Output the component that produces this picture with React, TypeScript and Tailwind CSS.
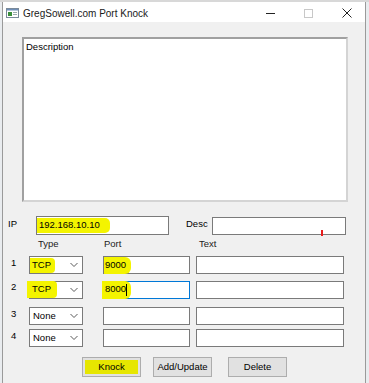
import React from "react";

const font = { fontFamily: '"Liberation Sans", Arial, sans-serif' };

const Chevron = () => (
  <svg width="8" height="5" viewBox="0 0 8 5" className="absolute right-[4px] top-1/2 -translate-y-1/2">
    <polyline points="0.5,0.5 4,4 7.5,0.5" fill="none" stroke="#5a5a5a" strokeWidth="1" />
  </svg>
);

const Select: React.FC<{ value: string; hi?: boolean; hiClass?: string }> = ({ value, hi, hiClass }) => (
  <div className="relative w-[54px] h-[18px] bg-white border border-[#7a7a7a] flex items-center">
    {hi ? (
      <span className={`bg-[#f4f400] h-[15px] flex items-center pl-[2px] pr-[4px] rounded-r-[4px] ${hiClass ?? ""}`}>{value}</span>
    ) : (
      <span className="pl-[3px]">{value}</span>
    )}
    <Chevron />
  </div>
);

const Input: React.FC<{ w: string; children?: React.ReactNode; focus?: boolean }> = ({ w, children, focus }) => (
  <div
    className={`${w} h-[18px] bg-white border ${focus ? "border-[#0078d7]" : "border-[#7a7a7a]"} flex items-center relative`}
  >
    {children}
  </div>
);

const Button: React.FC<{ label: string; hi?: boolean }> = ({ label, hi }) => (
  <div className="w-[59px] h-[20px] border border-[#adadad] bg-[#e1e1e1] flex items-center justify-center p-[2px]">
    <div className={`w-full h-full flex items-center justify-center ${hi ? "bg-[#e6e600]" : ""}`}>{label}</div>
  </div>
);

export default function App() {
  return (
    <div className="w-[369px] h-[383px] bg-[#e9ecef] overflow-hidden text-[9.5px] text-black" style={font}>
      <div className="h-[2px] bg-[#d8d8d8]" />
      <div className="ml-[2px] w-[364px] h-[381px] border-l border-r border-[#9a9a9a] bg-[#f0f0f0] flex flex-col">
        {/* title bar */}
        <div className="h-[20px] bg-white flex items-center relative">
          <svg width="13" height="10" viewBox="0 0 13 10" className="ml-[3px] mt-[2px]">
            <rect x="0.5" y="0.5" width="12" height="9" fill="#fff" stroke="#7a8a9a" />
            <rect x="1" y="1" width="11" height="1.5" fill="#6f8fb8" />
            <rect x="2" y="4" width="4" height="4" fill="#3a8f3a" />
            <rect x="7" y="4" width="4" height="1" fill="#9aa" />
            <rect x="7" y="6" width="4" height="1" fill="#9aa" />
          </svg>
          <span className="ml-[4px] mt-[2px] text-[10px] text-[#1a1a1a]">GregSowell.com Port Knock</span>
          <div className="ml-auto flex items-center mt-[2px]">
            <div className="w-[9px] h-[1px] bg-[#222] mr-[29px]" />
            <div className="w-[9px] h-[9px] border border-[#c8c8c8] mr-[29px]" />
            <svg width="10" height="10" viewBox="0 0 10 10" className="mr-[13px]">
              <path d="M0.5 0.5 L9.5 9.5 M9.5 0.5 L0.5 9.5" stroke="#222" strokeWidth="1" />
            </svg>
          </div>
        </div>

        {/* description box */}
        <div className="mt-[15px] ml-[19px] w-[326px] h-[165px] bg-white border-t-2 border-l-2 border-[#a0a0a0] border-r-2 border-b-2 border-r-[#d4d4d4] border-b-[#d4d4d4]">
          <div className="pl-[2px] pt-[1px]">Description</div>
        </div>

        {/* IP row */}
        <div className="mt-[14px] h-[19px] flex items-start">
          <span className="ml-[5px] w-[28px] mt-[1px]">IP</span>
          <div className="w-[133px] h-[19px] bg-white border border-[#7a7a7a] flex items-center">
            <span className="bg-[#f4f400] h-[15px] flex items-center pl-[2px] pr-[10px] rounded-r-[5px]">192.168.10.10</span>
          </div>
          <span className="ml-[17px] w-[26px] mt-[1px]">Desc</span>
          <div className="mt-[1px] w-[134px] h-[18px] bg-white border border-[#7a7a7a] relative">
            <div className="absolute left-[108px] top-[12px] w-[2px] h-[6px] bg-[#e81c1c]" />
          </div>
        </div>

        {/* headers */}
        <div className="mt-[2px] h-[14px] flex items-center text-[#222]">
          <span className="ml-[35px] w-[66px]">Type</span>
          <span className="w-[95px]">Port</span>
          <span>Text</span>
        </div>

        {/* rows */}
        <div className="mt-[5px] h-[18px] flex items-center">
          <span className="ml-[8px] w-[18px] -mt-[4px]">1</span>
          <Select value="TCP" hi hiClass="h-[14px]" />
          <div className="ml-[20px]">
            <Input w="w-[87px]">
              <span className="bg-[#f4f400] h-[17px] flex items-center pl-[1px] pr-[5px] rounded-r-[6px]">9000</span>
            </Input>
          </div>
          <div className="ml-[6px]">
            <Input w="w-[148px]" />
          </div>
        </div>

        <div className="mt-[6px] h-[19px] flex items-center">
          <span className="ml-[8px] w-[18px] -mt-[4px]">2</span>
          <Select value="TCP" hi hiClass="h-[17px] -ml-[3px] pl-[5px] pr-[6px]" />
          <div className="ml-[20px]">
            <Input w="w-[87px]" focus>
              <span className="bg-[#f4f400] h-[18px] -ml-[2px] flex items-center pl-[3px] pr-[4px] rounded-r-[6px]">
                8000<span className="inline-block w-[1px] h-[12px] bg-black" />
              </span>
            </Input>
          </div>
          <div className="ml-[6px]">
            <Input w="w-[148px]" />
          </div>
        </div>

        <div className="mt-[8px] h-[18px] flex items-center">
          <span className="ml-[8px] w-[18px] -mt-[4px]">3</span>
          <Select value="None" />
          <div className="ml-[20px]">
            <Input w="w-[87px]" />
          </div>
          <div className="ml-[6px]">
            <Input w="w-[148px]" />
          </div>
        </div>

        <div className="mt-[4px] h-[18px] flex items-center">
          <span className="ml-[8px] w-[18px] -mt-[4px]">4</span>
          <Select value="None" />
          <div className="ml-[20px]">
            <Input w="w-[87px]" />
          </div>
          <div className="ml-[6px]">
            <Input w="w-[148px]" />
          </div>
        </div>

        {/* buttons */}
        <div className="mt-[10px] flex items-center">
          <div className="ml-[79px]">
            <Button label="Knock" hi />
          </div>
          <div className="ml-[12px]">
            <Button label="Add/Update" />
          </div>
          <div className="ml-[16px]">
            <Button label="Delete" />
          </div>
        </div>
      </div>
    </div>
  );
}
